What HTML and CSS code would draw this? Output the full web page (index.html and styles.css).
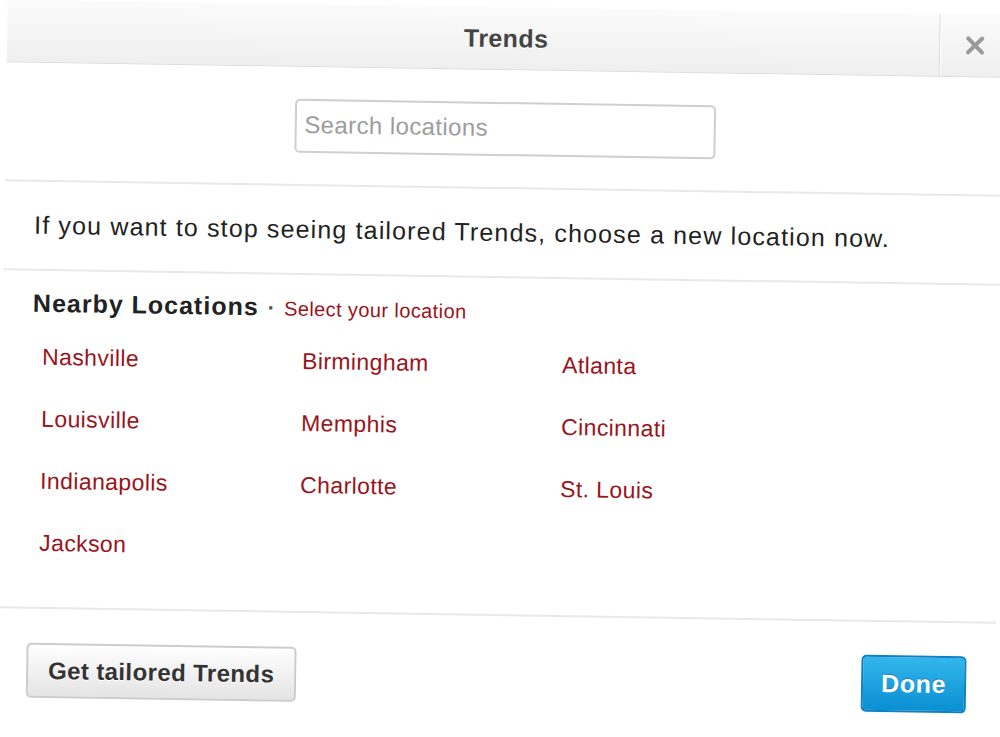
FILE: index.html
```html
<!DOCTYPE html>
<html>
<head>
<meta charset="utf-8">
<link rel="stylesheet" href="styles.css">
</head>
<body>
<div class="dialog">
  <div class="header">
    <h1 class="title">Trends</h1>
    <div class="close">
      <svg class="close-icon" width="20" height="20" viewBox="0 0 20 20">
        <path d="M3 3 L17 17 M17 3 L3 17" stroke="#9a9a9a" stroke-width="4" stroke-linecap="round" fill="none"/>
      </svg>
    </div>
  </div>
  <div class="search-row">
    <div class="search">Search locations</div>
  </div>
  <p class="notice">If you want to stop seeing tailored Trends, choose a new location now.</p>
  <div class="nearby">
    <div class="heading"><span class="heading-main">Nearby Locations</span><span class="dot">·</span><span class="select">Select your location</span></div>
    <div class="grid">
      <a class="loc">Nashville</a><a class="loc">Birmingham</a><a class="loc">Atlanta</a>
      <a class="loc">Louisville</a><a class="loc">Memphis</a><a class="loc">Cincinnati</a>
      <a class="loc">Indianapolis</a><a class="loc">Charlotte</a><a class="loc">St. Louis</a>
      <a class="loc">Jackson</a>
    </div>
  </div>
  <div class="footer">
    <button class="btn btn-default">Get tailored Trends</button>
    <button class="btn btn-primary">Done</button>
  </div>
</div>
</body>
</html>
```

FILE: styles.css
```css
html, body {
  margin: 0;
  padding: 0;
  background: #ffffff;
  overflow: hidden;
}
body {
  font-family: "Liberation Sans", Arial, Helvetica, sans-serif;
  color: #333333;
}
.dialog {
  margin: 7px 0 0 2px;
  width: 998px;
  background: #ffffff;
  transform: rotate(0.9deg);
  transform-origin: 497px 361px;
}
.header {
  display: flex;
  height: 62px;
  background: linear-gradient(#fbfbfb, #efefef);
  border-bottom: 1px solid #dcdcdc;
}
.title {
  flex: 1;
  margin: 0;
  padding-left: 66px;
  text-align: center;
  font-size: 25px;
  font-weight: bold;
  line-height: 62px;
  color: #444444;
  letter-spacing: 0.4px;
  text-shadow: 0 1px 0 #ffffff;
}
.close {
  width: 65px;
  display: flex;
  align-items: center;
  justify-content: center;
  border-left: 1px solid #dcdcdc;
  box-shadow: inset 1px 0 0 #ffffff;
}
.close-icon {
  display: block;
  margin-left: 4px;
}
.search-row {
  display: flex;
  justify-content: center;
  padding: 32px 0 31px;
  border-bottom: 2px solid #e8e8e8;
}
.search {
  box-sizing: border-box;
  width: 421px;
  height: 54px;
  border: 2px solid #cfcfcf;
  border-radius: 5px;
  padding: 0 8px;
  font-size: 24px;
  line-height: 48px;
  color: #9d9d9d;
  letter-spacing: 0.4px;
}
.notice {
  margin: 0;
  padding: 29px 30px;
  line-height: 29px;
  font-size: 25px;
  color: #222222;
  letter-spacing: 1.15px;
  border-bottom: 2px solid #e8e8e8;
}
.nearby {
  padding: 17px 30px 33px;
  border-bottom: 2px solid #e8e8e8;
}
.heading {
  line-height: 30px;
}
.heading-main {
  font-size: 25px;
  font-weight: bold;
  color: #222222;
  letter-spacing: 1px;
}
.dot {
  font-size: 22px;
  font-weight: bold;
  color: #555555;
  margin: 0 9px 0 9px;
}
.select {
  font-size: 20px;
  color: #9a1420;
  letter-spacing: 0.4px;
}
.grid {
  display: grid;
  grid-template-columns: 260px 260px 260px;
  grid-auto-rows: 62px;
  margin-top: 4px;
  padding-left: 10px;
}
.loc {
  font-size: 23px;
  line-height: 62px;
  color: #9a1420;
  letter-spacing: 0.4px;
}
.footer {
  display: flex;
  justify-content: space-between;
  align-items: center;
  padding: 33px 29px 40px;
}
.btn {
  font-family: "Liberation Sans", Arial, Helvetica, sans-serif;
  font-weight: bold;
  border-radius: 5px;
  cursor: pointer;
}
.btn-default {
  width: 270px;
  height: 55px;
  font-size: 24px;
  color: #333333;
  background: linear-gradient(#ffffff, #e4e4e4);
  border: 2px solid #cccccc;
  text-shadow: 0 1px 0 #ffffff;
  letter-spacing: 0.4px;
}
.btn-primary {
  width: 105px;
  height: 57px;
  font-size: 25px;
  color: #ffffff;
  background: linear-gradient(#33b6ec, #0a8fd2);
  border: 2px solid #0d80c6;
  text-shadow: 0 -1px 0 rgba(0, 0, 0, 0.25);
  letter-spacing: 0.6px;
}
```
